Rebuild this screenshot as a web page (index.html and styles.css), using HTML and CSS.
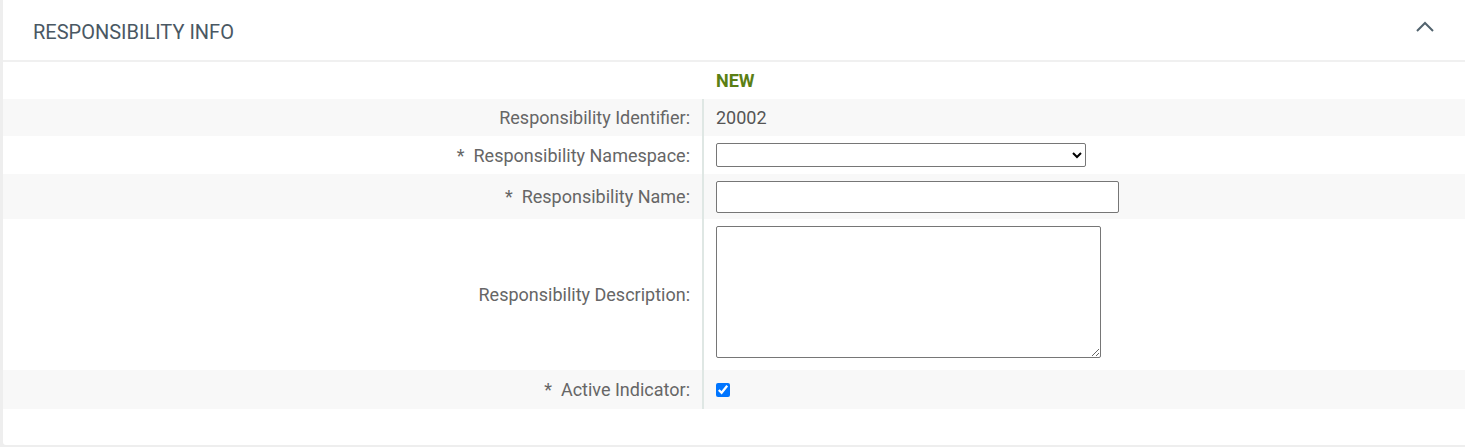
FILE: index.html
```html
<!DOCTYPE html>
<html>
<head>
<meta charset="utf-8">
<link rel="stylesheet" href="styles.css">
</head>
<body>
<div class="card">
  <div class="card-header">
    <span class="title">RESPONSIBILITY INFO</span>
    <svg class="chev" width="20" height="12" viewBox="0 0 20 12"><path d="M2 10 L10 2 L18 10" fill="none" stroke="#52636e" stroke-width="2"/></svg>
  </div>
  <div class="form">
    <div class="row new-row"><div class="lbl"></div><div class="val new">NEW</div></div>
    <div class="row alt r-id"><div class="lbl">Responsibility Identifier:</div><div class="val div">20002</div></div>
    <div class="row r-ns"><div class="lbl">*&nbsp; Responsibility Namespace:</div><div class="val div"><select class="sel"><option></option></select></div></div>
    <div class="row alt r-name"><div class="lbl">*&nbsp; Responsibility Name:</div><div class="val div"><input class="inp" type="text"></div></div>
    <div class="row r-desc"><div class="lbl">Responsibility Description:</div><div class="val div top"><textarea class="ta"></textarea></div></div>
    <div class="row alt r-act"><div class="lbl">*&nbsp; Active Indicator:</div><div class="val div"><input class="chk" type="checkbox" checked></div></div>
  </div>
</div>
</body>
</html>
```
FILE: styles.css
```css
html, body { margin: 0; padding: 0; }
body { background: #eeeeee; font-family: Roboto, "Liberation Sans", sans-serif; width: 1465px; height: 447px; overflow: hidden; }
.card { margin-left: 3px; background: #fff; height: 445px; border-bottom-left-radius: 3px; }
.card-header { height: 60px; border-bottom: 2px solid #f0f0f0; display: flex; align-items: center; justify-content: space-between; padding: 0 30px 0 30px; }
.title { font-size: 20px; color: #4a5863; margin-top: 4px; }
.chev { margin-top: -6px; }
.form { display: flex; flex-direction: column; }
.row { display: grid; grid-template-columns: 699px 1fr; font-size: 18px; color: #666; }
.row.alt { background: #f8f8f8; }
.lbl { text-align: right; padding-right: 12px; display: flex; align-items: center; justify-content: flex-end; }
.val { padding-left: 12px; display: flex; align-items: center; color: #555; }
.val.div { border-left: 2px solid #dfe7e4; }
.val.top { align-items: flex-start; }
.new-row { height: 37px; }
.new { color: #5b7f15; font-weight: bold; font-size: 18px; padding-left: 14px; }
.r-id { height: 37px; }
.r-ns { height: 38px; }
.r-name { height: 45px; }
.r-desc { height: 151px; }
.r-act { height: 39px; }
.sel { width: 370px; height: 24px; margin: 0; border: 1px solid #767676; border-radius: 2px; background: #fff; font-size: 14px; }
.inp { width: 403px; height: 32px; box-sizing: border-box; margin: 0; border: 1px solid #767676; border-radius: 2px; }
.ta { width: 385px; height: 132px; box-sizing: border-box; margin: 7px 0 0 0; border: 1px solid #767676; border-radius: 2px; resize: both; }
.chk { width: 14px; height: 14px; margin: 0; }
```
